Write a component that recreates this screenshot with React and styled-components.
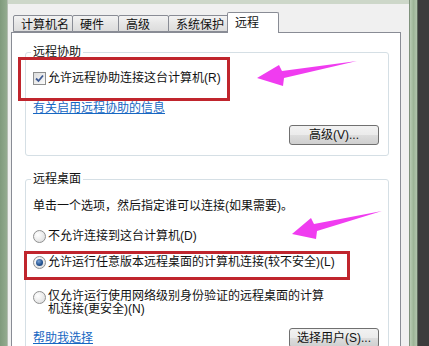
import React from "react";
import styled, { createGlobalStyle } from "styled-components";

const Global = createGlobalStyle`
  html, body { margin: 0; padding: 0; background: #3c3c3c; }
  body { font-family: "Liberation Sans", "Noto Sans CJK SC", sans-serif; font-size: 12px; color: #111; }
`;

const Screen = styled.div`
  position: relative;
  width: 429px;
  height: 346px;
  overflow: hidden;
  display: flex;
  background: #3c3c3c;
`;

const LeftFrame = styled.div`
  width: 7px;
  flex: none;
  background: linear-gradient(90deg, #7f9a7c, #93ab8f);
  border-right: 1px solid #b4bdb2;
`;

const RightFrame = styled.div`
  width: 7px;
  flex: none;
  background: linear-gradient(90deg, #b9ccb4, #9db597, #b3c5ae);
  border-left: 1px solid #7f927c;
  border-right: 1px solid #5e6a5c;
`;

const Dialog = styled.div`
  width: 401px;
  flex: none;
  box-sizing: border-box;
  background: #f0f0f0;
  border-top: 4px solid #cdd7c9;
  padding: 8px 8px 0 3px;
  display: flex;
  flex-direction: column;
`;

const TabRow = styled.div`
  display: flex;
  align-items: flex-end;
  height: 20px;
  margin-left: 2px;
  position: relative;
  z-index: 1;
`;

const Tab = styled.div`
  box-sizing: border-box;
  width: ${(p) => p.$w}px;
  height: ${(p) => (p.$active ? 21 : 17)}px;
  margin-left: ${(p) => (p.$first ? 0 : p.$active ? -2 : -1)}px;
  margin-bottom: ${(p) => (p.$active ? -1 : 0)}px;
  padding-left: 7px;
  padding-top: ${(p) => (p.$active ? 0 : 2)}px;
  display: flex;
  align-items: center;
  border: 1px solid #898c95;
  border-bottom: ${(p) => (p.$active ? "none" : "1px solid #898c95")};
  border-radius: 2px 2px 0 0;
  background: ${(p) =>
    p.$active ? "#ffffff" : "linear-gradient(#f3f3f3, #e6e6e6 50%, #dcdcdc)"};
  line-height: 16px;
  white-space: nowrap;
`;

const Panel = styled.div`
  flex: 1;
  background: #fff;
  border: 1px solid #898c95;
  border-bottom: none;
  padding: 9px 11px 0 13px;
`;

const Group = styled.fieldset`
  margin: ${(p) => p.$mt || 0}px 0 0 0;
  padding: ${(p) => p.$pt}px 9px ${(p) => p.$pb}px 7px;
  border: 1px solid #d5dfe5;
  border-radius: 3px;
  min-width: 0;
`;

const Legend = styled.legend`
  padding: 0 2px;
  margin-left: -2px;
  line-height: 17px;
`;

const Row = styled.div`
  display: flex;
  align-items: ${(p) => p.$align || "center"};
  justify-content: ${(p) => p.$justify || "flex-start"};
  margin-top: ${(p) => p.$mt || 0}px;
  line-height: ${(p) => p.$lh || 17}px;
  white-space: nowrap;
`;

const Text = styled.div`
  margin-top: ${(p) => p.$mt || 0}px;
  line-height: 17px;
  white-space: nowrap;
`;

const Link = styled.a`
  display: block;
  margin-top: ${(p) => p.$mt || 0}px;
  color: #1767c2;
  text-decoration: underline;
  line-height: 17px;
  cursor: pointer;
`;

const Box = styled.span`
  box-sizing: border-box;
  width: 13px;
  height: 13px;
  flex: none;
  margin-right: 2px;
  margin-top: ${(p) => p.$mt || 0}px;
  border: 1px solid #8e8f8f;
  background: linear-gradient(135deg, #dcdcdc, #fbfbfb);
  display: flex;
  align-items: center;
  justify-content: center;
`;

const RadioCircle = styled(Box)`
  border-radius: 50%;
  border-color: #8f9090;
  background: radial-gradient(circle at 35% 35%, #ffffff, #d9d9d9);
`;

const Dot = styled.span`
  width: 7px;
  height: 7px;
  border-radius: 50%;
  background: radial-gradient(circle at 40% 35%, #7aa3d6, #1f4e8c 60%, #163a6a);
`;

const Button = styled.button`
  box-sizing: border-box;
  width: 90px;
  height: 20px;
  padding: 0;
  border: 1px solid #707070;
  border-radius: 3px;
  background: linear-gradient(#f2f2f2 0%, #ebebeb 50%, #dddddd 51%, #cfcfcf 100%);
  font: inherit;
  color: #111;
  line-height: 17px;
`;

const Highlight = styled.div`
  position: absolute;
  box-sizing: border-box;
  left: ${(p) => p.$x}px;
  top: ${(p) => p.$y}px;
  width: ${(p) => p.$w}px;
  height: ${(p) => p.$h}px;
  border: 3px solid #c0252d;
  pointer-events: none;
`;

const Arrows = styled.svg`
  position: absolute;
  left: 0;
  top: 0;
  pointer-events: none;
`;

const Check = () => (
  <svg width="9" height="9" viewBox="0 0 9 9">
    <path d="M1 4.5 L3.5 7 L8 1.5" fill="none" stroke="#3f5b93" strokeWidth="1.8" />
  </svg>
);

const tabs = [
  { label: "计算机名", w: 60 },
  { label: "硬件", w: 47 },
  { label: "高级", w: 51 },
  { label: "系统保护", w: 61 },
  { label: "远程", w: 52, active: true },
];

export default function App() {
  return (
    <>
      <Global />
      <Screen>
        <LeftFrame />
        <Dialog>
          <TabRow>
            {tabs.map((t, i) => (
              <Tab key={t.label} $w={t.w} $active={t.active} $first={i === 0}>
                {t.label}
              </Tab>
            ))}
          </TabRow>
          <Panel>
            <Group $mt={2} $pt={9} $pb={10}>
              <Legend>远程协助</Legend>
              <Row>
                <Box>
                  <Check />
                </Box>
                允许远程协助连接这台计算机(R)
              </Row>
              <Link $mt={13}>有关启用远程协助的信息</Link>
              <Row $justify="flex-end" $mt={8}>
                <Button>高级(V)...</Button>
              </Row>
            </Group>
            <Group $mt={15} $pt={10} $pb={10}>
              <Legend>远程桌面</Legend>
              <Text>单击一个选项，然后指定谁可以连接(如果需要)。</Text>
              <Row $mt={13}>
                <RadioCircle />
                不允许连接到这台计算机(D)
              </Row>
              <Row $mt={9}>
                <RadioCircle>
                  <Dot />
                </RadioCircle>
                允许运行任意版本远程桌面的计算机连接(较不安全)(L)
              </Row>
              <Row $mt={19} $align="flex-start" $lh={13}>
                <RadioCircle $mt={1} />
                <span>
                  仅允许运行使用网络级别身份验证的远程桌面的计算
                  <br />
                  机连接(更安全)(N)
                </span>
              </Row>
              <Row $justify="space-between" $mt={12}>
                <Link>帮助我选择</Link>
                <Button>选择用户(S)...</Button>
              </Row>
            </Group>
          </Panel>
        </Dialog>
        <RightFrame />
        <Highlight $x={18} $y={57} $w={212} $h={44} />
        <Highlight $x={24} $y={251} $w={326} $h={29} />
        <Arrows width="429" height="346" viewBox="0 0 429 346">
          <polygon
            points="257,78 279,65 282,71 357,61 284,78 283,86"
            fill="#f03cf0"
          />
          <polygon
            points="292,234 311,218 314,224 382,211 317,231 316,239"
            fill="#f03cf0"
          />
        </Arrows>
      </Screen>
    </>
  );
}
